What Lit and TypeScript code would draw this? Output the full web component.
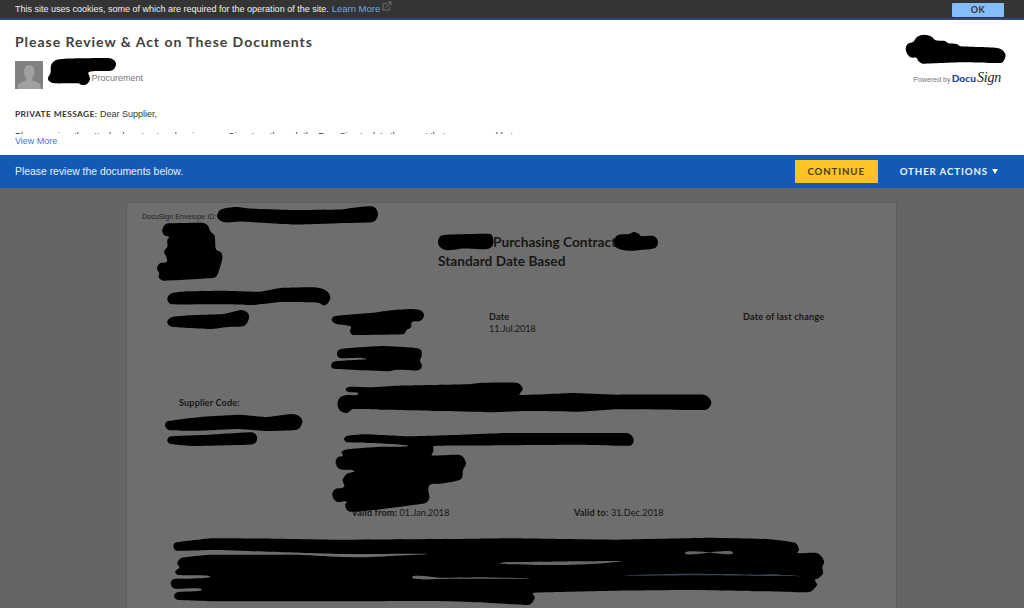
import { LitElement, html, svg, css } from 'lit';
import { customElement, property } from 'lit/decorators.js';

type Point = [number, number];

// Outlines of the marker strokes that hide confidential data, in view coordinates.
const MARKS: string[] = [
  // sender name
  '48,78 50.5,73 51.5,64 58,59.5 78,58.3 108,58 114,60 116,64.5 113,70 108,71 89,72 90,79 87,84 82,85 78,83.3 54,83.3 49,81',
  // company logo
  '905.7,50 907.7,44 913.3,41.7 917.3,36.7 924,34.7 931.7,36.7 935.7,40.3 945,41 948.3,43.3 956.7,44 960.7,46.3 986.7,47.3 1000,48.7 1005,53.3 1005,58.3 1001,63 960,62.3 923.3,63.7 918.3,61 916.7,58 910,57',
  // envelope id
  '217,215.5 221,209.5 236,207 250,208.5 295,210 340,209.5 355,207.5 373,206.5 378,214 373,222 345,223 300,224.5 280,224 240,221.5 225,222.3 218.5,219',
  // supplier logo
  '162.3,230 165,224.7 170,223.3 201.7,222.7 207.3,225 210.7,231.7 214.7,236 216,249.3 221.3,252.7 222.3,258.3 219.7,268.3 216.7,276 213.3,278 163.3,280.7 158.7,277.3 159.3,273.3 157,268.7 160,263.3 166.7,261.7 166.3,256.7 164,251.7 167.3,246.7 167.3,240 169,237 164,235',
  // contract title, both ends
  '438,242 440,236.5 444,235 460,234.3 490,234 493.5,241 491,247.5 483,249.3 464,248.5 447,250.3 440,247',
  '614,241 618,235 629,234 634,232 639,234 641,236 654,236.3 658,242 655,248 640,250 629,250.7 617,248',
  // address block
  '167.3,299 171.7,293.3 188.3,291.3 223.3,290.7 260,291.7 280,288 313.3,287.3 325,290 330.3,297.3 325,305.3 318.3,302.7 280,302 253.3,305 220,304.3 171.7,304.3',
  '167.3,322.7 171.7,317.3 190,315.3 223.3,314 235,311.3 241.7,310 248,313.3 248.7,319.3 244,326 230,326.7 210,329 173.3,327',
  '331.7,320 335,316 373.3,312.7 393.3,310 413,309 421.7,311 424,316 420,321 412,322 411,327.3 406.7,330 403.3,334.3 353,335 350,331.5 350.7,326.5 336.7,324',
  '337,354 340,349.3 360,347.3 383.3,346 413.3,347.7 421,350 421.5,356.5 420,360.5 422,366 418.3,370.3 396.7,369.7 388.3,371.3 333.3,368.7 331,365 335,361.3 366.7,359.3 360,357.7 340,358',
  '345.7,389.3 350,386.7 370,387.3 396.7,385.7 433.3,385 466.7,384.3 483.3,382.7 516.7,382.7 522.7,388.3 520,395 573.3,393 616.7,394.7 703.3,394.7 711.3,402.3 705,410 616.7,409.3 580,411.7 523.3,411 493.3,412.3 440,411 383.3,409.7 353.3,409 346.7,413 340,410.5 337.5,404 339.5,398 345,395.3 358.3,394 348.3,392',
  // supplier code
  '165,425.7 168.3,421 203.3,416.7 240,414.7 266.7,417 291.7,414 300,416.7 302.3,422.7 296.7,429.7 266.7,431 236.7,429 200,430.7 170,430.3',
  '167.3,440 170.7,436.3 210,434.7 251.7,432.3 257,436.7 255,443.3 248.3,444.7 193.3,446 170,443.7',
  // contact block
  '344,439 347.3,435.7 366.7,434.3 406.7,436.3 440,435.5 506.7,433 626.7,433 633.7,439.3 630,445.7 573.3,444.7 470,445.5 434,446 433.5,451 432,455.5 460,455 466,463.3 463,470 461.7,478.3 455,481.3 440,483.7 430,484.7 428.3,490 429.3,498.3 425,503.3 383.3,509 356.7,511.5 348.3,511 345,505 346.7,501.7 336.7,501.7 332.3,495 335,489.3 344,486.7 342.7,480 346.7,474 354,470.7 340,469.3 335.7,463.3 337.7,457.3 342.7,455.7 341.7,451.7 350,449 380,446.7 408.3,445.7 370,443 347,442.3',
  // terms
  '173.3,546 176.7,542.3 211.7,538.3 276.7,538.7 336.7,539.7 480,538.7 513.3,538.3 613.3,539.7 710,537.7 766.7,539 795,542.7 799,549.3 797.7,553 816.7,553 824,560.7 822.3,567.3 823,573.3 818.3,578.3 815,580 817,585 808.3,592.3 760,591.3 686.7,590 613.3,590.7 533.3,592.7 534.7,598.3 528.3,605 480,602.3 430,601 333.3,601.3 216.7,601.3 178.3,600 174,596 178.3,592 201.7,589.3 175,588.7 170.7,583.7 174,579 210,576.7 178.3,575 175.3,571.7 179.3,567.3 177.3,563.3 181.7,557.7 210,554.7 296.7,554.7 336.7,556.7 363.3,557.3 426.7,554.2 426.7,553.7 336.7,554 283.3,552.3 213.3,550 176.7,550.7',
];

// Slivers of paper left between the strokes of the last block.
const GAPS: { points: string; tint?: boolean }[] = [
  { points: '500,563.2 520,562 560,561.4 623,561 600,563.6 570,565 540,565 515,564.2' },
  { points: '412,577.3 440,577.8 480,577.2 530,578.4 500,578.8 440,578.9' },
  { points: '685,552.9 710,552.2 733,552.7 710,552.8' },
  { points: '760,575.2 775,574.6 801,576.4 790,576' },
  { points: '623,575.6 680,573.8 740,574.2 800,576 770,576 690,575.2', tint: true },
];

// Vector along a -> b with the given length.
function handle(a: Point, b: Point, length: number): Point {
  const dx = b[0] - a[0];
  const dy = b[1] - a[1];
  const size = Math.hypot(dx, dy) || 1;
  return [(dx / size) * length, (dy / size) * length];
}

function outline(source: string): string {
  const pts = source.split(' ').map((p) => p.split(',').map(Number) as Point);
  const n = pts.length;
  let d = `M${pts[0]}`;
  for (let i = 0; i < n; i++) {
    const p0 = pts[(i + n - 1) % n];
    const p1 = pts[i];
    const p2 = pts[(i + 1) % n];
    const p3 = pts[(i + 2) % n];
    const length = Math.min(3.5, Math.hypot(p2[0] - p1[0], p2[1] - p1[1]) * 0.33);
    const h1 = handle(p0, p2, length);
    const h2 = handle(p1, p3, length);
    d += `C${p1[0] + h1[0]},${p1[1] + h1[1]} ${p2[0] - h2[0]},${p2[1] - h2[1]} ${p2}`;
  }
  return d + 'Z';
}

@customElement('cookie-bar')
export class CookieBar extends LitElement {
  static styles = css`
    :host {
      display: flex;
      align-items: center;
      box-sizing: border-box;
      height: 20px;
      padding: 0 20px 0 15px;
      background: #343434;
      border-bottom: 2px solid #30477c;
      color: #f2f2f2;
      font-size: 9px;
    }
    .link { color: #6ea8e8; margin-left: 3px; font-size: 9.5px; line-height: 11px; margin-top: -1px; }
    .external { width: 10px; height: 10px; margin: -6px 0 0 2px; }
    .ok {
      margin: 1px 0 0 auto;
      width: 52px;
      height: 14px;
      border: none;
      border-radius: 1px;
      padding: 0;
      background: #85bdfb;
      color: #333;
      font: 700 9px/14px Lato, sans-serif;
      letter-spacing: 0.5px;
    }
  `;

  render() {
    return html`
      <span>This site uses cookies, some of which are required for the operation of the site.</span>
      <span class="link">Learn More</span>
      <svg class="external" viewBox="0 0 10 10" fill="none" stroke="#777" stroke-width="0.9">
        <path d="M4.5 2.6H1V9H7.4V5.6M3.6 6.4L8.8 1.2M5.8 1H9V4.2" />
      </svg>
      <button class="ok">OK</button>
    `;
  }
}

@customElement('envelope-header')
export class EnvelopeHeader extends LitElement {
  static styles = css`
    :host {
      display: flex;
      justify-content: space-between;
      box-sizing: border-box;
      height: 135px;
      padding: 13px 23px 0 15px;
      background: #fff;
      color: #333;
    }
    h1 {
      margin: 0;
      font: 700 14px/18px Lato, sans-serif;
      letter-spacing: 0.96px;
      color: #404040;
    }
    .sender { display: flex; align-items: flex-end; margin-top: 10px; height: 28px; }
    .avatar { width: 28px; height: 28px; }
    .role { margin-left: 48.5px; padding-bottom: 5px; font-size: 9px; line-height: 12px; color: #777; }
    .message { margin-top: 19px; font-size: 9px; line-height: 12px; }
    .message b { font: 700 8.4px/12px Lato, sans-serif; letter-spacing: 0.4px; }
    .rest { height: 4px; margin-top: 10px; overflow: hidden; white-space: nowrap; line-height: 12px; font-size: 9.1px; }
    .more { margin-top: 2px; color: #3b78dc; font-size: 9px; line-height: 11px; }
    .powered {
      display: flex;
      align-items: baseline;
      margin-top: 36px;
      height: 18px;
      line-height: 18px;
      font-size: 7.1px;
      color: #777;
    }
    .docu { margin-left: 1px; font: 900 10.2px/18px Lato, sans-serif; color: #24479b; }
    .sign { margin-left: 1px; font: italic 14px/18px "Liberation Serif", serif; letter-spacing: -0.2px; color: #222; }
  `;

  render() {
    return html`
      <div>
        <h1>Please Review &amp; Act on These Documents</h1>
        <div class="sender">
          <svg class="avatar" viewBox="0 0 28 28">
            <rect width="28" height="28" fill="#808080" />
            <path
              d="M2.5 28C2.5 22 6 21.3 11.3 19.6V17.2C9.7 15.5 9 13 9.1 9.8C9.2 6.3 11.3 4.3 14.2 4.3S19.2 6.3 19.3 9.8C19.4 13 18.6 15.5 17.2 17.2V19.6C22.5 21.3 25.8 22 25.8 28Z"
              fill="#a0a0a0"
            />
          </svg>
          <span class="role">Procurement</span>
        </div>
        <div class="message"><b>PRIVATE MESSAGE:</b> Dear Supplier,</div>
        <div class="rest">
          Please review the attached contract and review your Signature through the DocuSign tool. In the event that you are unable to
        </div>
        <div class="more">View More</div>
      </div>
      <div class="powered">
        <span>Powered by</span><span class="docu">Docu</span><span class="sign">Sign</span>
      </div>
    `;
  }
}

@customElement('action-bar')
export class ActionBar extends LitElement {
  static styles = css`
    :host {
      display: flex;
      align-items: center;
      box-sizing: border-box;
      height: 33px;
      padding: 0 26px 0 15px;
      background: #125ab6;
      color: #e8f0fb;
      font-size: 10.4px;
    }
    button {
      padding: 0;
      border: none;
      font: 700 9.7px/23px Lato, sans-serif;
      letter-spacing: 0.88px;
    }
    .continue {
      margin-left: auto;
      width: 83px;
      height: 23px;
      border-radius: 1px;
      background: #ffc423;
      color: #4a3d14;
    }
    .other {
      display: flex;
      align-items: center;
      gap: 4px;
      margin-left: 22px;
      background: none;
      color: #f0f5fc;
    }
    .caret { width: 6px; height: 5px; }
  `;

  render() {
    return html`
      <span>Please review the documents below.</span>
      <button class="continue">CONTINUE</button>
      <button class="other">
        OTHER ACTIONS
        <svg class="caret" viewBox="0 0 6 5"><path d="M0 0H6L3 5Z" fill="#fff" /></svg>
      </button>
    `;
  }
}

@customElement('doc-field')
export class DocField extends LitElement {
  @property() label = '';
  @property() value = '';

  static styles = css`
    :host { display: block; white-space: nowrap; letter-spacing: 0.08px; }
    b { font-weight: 700; letter-spacing: 0.15px; }
  `;

  render() {
    return html`<b>${this.label}</b>${this.value ? html` ${this.value}` : ''}`;
  }
}

@customElement('contract-page')
export class ContractPage extends LitElement {
  static styles = css`
    :host {
      display: block;
      box-sizing: border-box;
      width: 771px;
      height: 420px;
      margin: 14px 0 0 126px;
      padding: 9px 0 0 15px;
      background: #6e6e6e;
      border: 1px solid #5d5d5d;
      color: #171717;
      font: 9.1px/12px Lato, sans-serif;
    }
    .envelope { font: 7.2px/10px "Liberation Sans", sans-serif; color: #222; }
    h2 {
      margin: 10px 0 0 296px;
      font: 700 13.7px/19px Lato, sans-serif;
    }
    h2 .name { display: inline-block; width: 55px; }
    .dates { display: grid; grid-template-columns: 254px auto; margin: 41px 0 0 347px; }
    .dates b { display: block; letter-spacing: 0.2px; }
    .code { margin: 62px 0 0 37px; }
    .validity { display: grid; grid-template-columns: 222.5px auto; margin: 98px 0 0 209.5px; }
  `;

  render() {
    return html`
      <div class="envelope">DocuSign Envelope ID:</div>
      <h2><span class="name"></span>Purchasing Contract<br />Standard Date Based</h2>
      <div class="dates">
        <div><b>Date</b>11.Jul.2018</div>
        <div><b>Date of last change</b></div>
      </div>
      <doc-field class="code" label="Supplier Code:"></doc-field>
      <div class="validity">
        <doc-field label="Valid from:" value="01.Jan.2018"></doc-field>
        <doc-field label="Valid to:" value="31.Dec.2018"></doc-field>
      </div>
    `;
  }
}

@customElement('app-root')
export class AppRoot extends LitElement {
  static styles = css`
    :host {
      display: block;
      position: relative;
      width: 1024px;
      height: 608px;
      overflow: hidden;
      background: #656565;
      font-family: "Liberation Sans", Arial, sans-serif;
    }
    .viewer { display: flow-root; }
    .marks { position: absolute; inset: 0; width: 1024px; height: 608px; pointer-events: none; }
    .gap { fill: #666; }
    .tint { fill: #35445a; }
  `;

  render() {
    return html`
      <cookie-bar></cookie-bar>
      <envelope-header></envelope-header>
      <action-bar></action-bar>
      <div class="viewer"><contract-page></contract-page></div>
      <svg class="marks" viewBox="0 0 1024 608">
        ${MARKS.map((m) => svg`<path d=${outline(m)} />`)}
        ${GAPS.map((g) => svg`<path class=${g.tint ? 'tint' : 'gap'} d=${outline(g.points)} />`)}
      </svg>
    `;
  }
}
